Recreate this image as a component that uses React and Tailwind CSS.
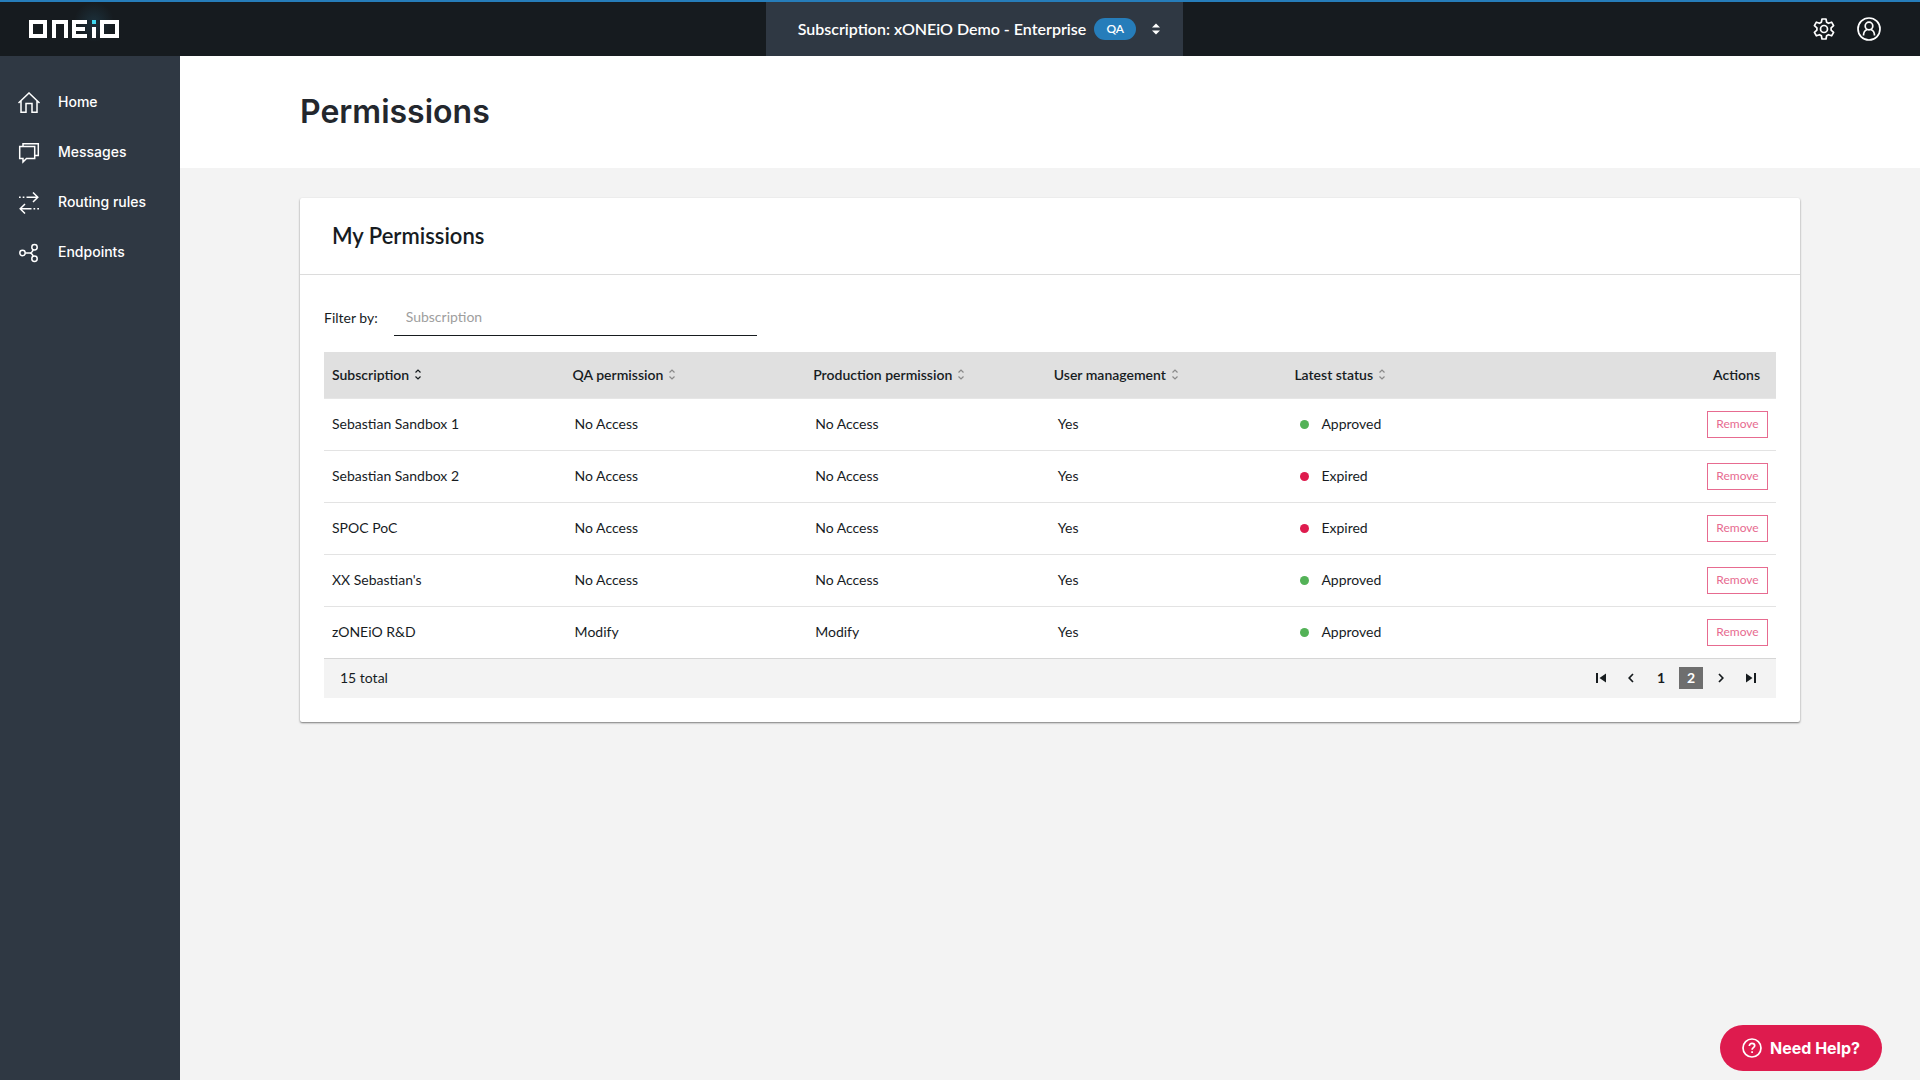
import { useState } from 'react';

const navItems = [
  { label: 'Home', icon: HomeIcon },
  { label: 'Messages', icon: MessagesIcon },
  { label: 'Routing rules', icon: RoutingIcon },
  { label: 'Endpoints', icon: EndpointsIcon },
];

const columns = ['Subscription', 'QA permission', 'Production permission', 'User management', 'Latest status'];

const permissions = [
  { name: 'Sebastian Sandbox 1', qa: 'No Access', production: 'No Access', management: 'Yes', status: 'Approved' },
  { name: 'Sebastian Sandbox 2', qa: 'No Access', production: 'No Access', management: 'Yes', status: 'Expired' },
  { name: 'SPOC PoC', qa: 'No Access', production: 'No Access', management: 'Yes', status: 'Expired' },
  { name: "XX Sebastian's", qa: 'No Access', production: 'No Access', management: 'Yes', status: 'Approved' },
  { name: 'zONEiO R&D', qa: 'Modify', production: 'Modify', management: 'Yes', status: 'Approved' },
];

function Logo() {
  return (
    <svg width="90" height="18" viewBox="0 0 90 18" className="overflow-visible" role="img" aria-label="ONEiO">
      <defs>
        <radialGradient id="glow">
          <stop offset="0" stopColor="#2f6f8f" stopOpacity="0.25" />
          <stop offset="1" stopColor="#2f6f8f" stopOpacity="0" />
        </radialGradient>
      </defs>
      <circle cx="65" cy="2" r="20" fill="url(#glow)" />
      <g fill="none" stroke="#fff" strokeWidth="4">
        <rect x="2" y="2" width="14" height="14" />
        <polyline points="25,18 25,2 37,2 37,18" />
        <polyline points="58,2 45,2 45,16 58,16" />
        <line x1="45" y1="9" x2="56" y2="9" />
        <line x1="65" y1="7" x2="65" y2="18" />
        <rect x="73" y="2" width="15" height="14" />
      </g>
      <rect x="63" y="0" width="4" height="4" fill="#3fd9f0" />
    </svg>
  );
}

function HomeIcon() {
  return (
    <svg width="22" height="22" viewBox="0 0 22 22" fill="none" stroke="currentColor" strokeWidth="1.5">
      <path d="M3 9v11.2h5V11.5h6v8.7h5V9M.5 11 11 1l10.5 10" />
    </svg>
  );
}

function MessagesIcon() {
  return (
    <svg width="22" height="22" viewBox="0 0 22 22" fill="none" stroke="currentColor" strokeWidth="1.5">
      <path d="M1.7 4.5h15v12H8.5L5 20v-3.5H1.7zM5 4.500V1.800h15.300v11.700h-3.500" />
    </svg>
  );
}

function RoutingIcon() {
  return (
    <svg width="22" height="22" viewBox="0 0 22 22" fill="none" stroke="currentColor" strokeWidth="1.5">
      <path d="M8.5 5.300H20M15 .5l4.800 4.800L15 10M1 5.300h1.700M4.700 5.300h1.700M13.500 16.700H2M7 12l-4.800 4.700L7 21.500M15.500 16.700h1.700M19.300 16.700H21" />
    </svg>
  );
}

function EndpointsIcon() {
  return (
    <svg width="22" height="22" viewBox="0 0 22 22" fill="none" stroke="currentColor" strokeWidth="1.5">
      <circle cx="4.5" cy="11" r="2.7" />
      <circle cx="16.5" cy="5.3" r="2.7" />
      <circle cx="16.5" cy="16.7" r="2.7" />
      <path d="M7.2 11h4.5M15.200 7.700C14.500 9.500 13.500 11 11.700 11c1.800 0 2.800 1.500 3.500 3.300" />
    </svg>
  );
}

function GearIcon() {
  return (
    <svg width="22" height="22" viewBox="0 0 22 22" fill="none" stroke="currentColor" strokeWidth="1.7" strokeLinejoin="round">
      <circle cx="11" cy="11" r="3.500" />
      <path d="M9 1h4l.6 3.200 1.900 1.100 3.100-1.100 2 3.500-2.500 2.100v2.400l2.500 2.100-2 3.500-3.100-1.100-1.900 1.100L13 21H9l-.6-3.200-1.900-1.100-3.100 1.100-2-3.500 2.500-2.100V9.800L1.400 7.700l2-3.500 3.100 1.100 1.900-1.100z" />
    </svg>
  );
}

function UserIcon() {
  return (
    <svg width="24" height="24" viewBox="0 0 24 24" fill="none" stroke="currentColor" strokeWidth="1.7">
      <circle cx="12" cy="12" r="11" />
      <circle cx="12" cy="9" r="3.8" />
      <path d="M6.500 18.500c0-3.500 1.500-5.200 3.700-6M17.500 18.500c0-3.500-1.500-5.200-3.700-6" />
    </svg>
  );
}

function SortIcon({ active }) {
  return (
    <svg
      width="6"
      height="11"
      viewBox="0 0 6 11"
      fill="none"
      stroke="currentColor"
      strokeWidth="1.2"
      className={active ? 'text-[#171c1f]' : 'text-[#8a8a8a]'}
    >
      <path d="M.5 3.500 3 1l2.500 2.500M.5 7.500 3 10l2.500-2.500" />
    </svg>
  );
}

function PagerButton({ label, active, onClick, children }) {
  return (
    <button
      type="button"
      aria-label={label}
      onClick={onClick}
      className={`flex h-[22px] w-6 items-center justify-center text-sm font-bold ${active ? 'bg-[#6e6e6e] text-white' : 'text-[#171c1f]'}`}
    >
      {children}
    </button>
  );
}

function Pager() {
  const [page, setPage] = useState(2);

  return (
    <div className="flex gap-[6px]">
      <PagerButton label="First page" onClick={() => setPage(1)}>
        <svg width="10" height="10" viewBox="0 0 10 10" fill="currentColor">
          <path d="M0 0h2v10H0zM10 .5v9L3.500 5z" />
        </svg>
      </PagerButton>
      <PagerButton label="Previous page" onClick={() => setPage(1)}>
        <svg width="6" height="10" viewBox="0 0 6 10" fill="none" stroke="currentColor" strokeWidth="1.7">
          <path d="M5 1 1.200 5 5 9" />
        </svg>
      </PagerButton>
      <PagerButton active={page === 1} onClick={() => setPage(1)}>1</PagerButton>
      <PagerButton active={page === 2} onClick={() => setPage(2)}>2</PagerButton>
      <PagerButton label="Next page" onClick={() => setPage(2)}>
        <svg width="6" height="10" viewBox="0 0 6 10" fill="none" stroke="currentColor" strokeWidth="1.7">
          <path d="M1 1l3.800 4L1 9" />
        </svg>
      </PagerButton>
      <PagerButton label="Last page" onClick={() => setPage(2)}>
        <svg width="10" height="10" viewBox="0 0 10 10" fill="currentColor">
          <path d="M8 0h2v10H8zM0 .5v9L6.500 5z" />
        </svg>
      </PagerButton>
    </div>
  );
}

function Header() {
  return (
    <header className="grid h-14 grid-cols-[1fr_auto_1fr] border-t-2 border-[#267dba] bg-[#161b1f] pl-[29px] text-white">
      <a href="#home" className="flex items-center self-center">
        <Logo />
      </a>
      <button type="button" className="flex items-center bg-[#2f3843] pl-8 pr-[23px]">
        <span className="text-base font-semibold">Subscription: xONEiO Demo - Enterprise</span>
        <span className="ml-2 flex h-[22px] w-[42px] items-center justify-center rounded-full bg-[#267dba] text-xs font-semibold">QA</span>
        <svg width="8" height="12" viewBox="0 0 8 12" fill="currentColor" className="ml-4">
          <path d="M0 4.500 4 .5l4 4zM0 7.500l4 4 4-4z" />
        </svg>
      </button>
      <div className="flex items-center justify-end gap-[22px] pr-[39px]">
        <button type="button" aria-label="Settings"><GearIcon /></button>
        <button type="button" aria-label="Account"><UserIcon /></button>
      </div>
    </header>
  );
}

function Sidebar() {
  return (
    <nav className="w-[180px] shrink-0 bg-[#2f3843] pt-[22px] font-[Inter,sans-serif] text-sm font-medium text-white">
      {navItems.map(({ label, icon: Icon }) => (
        <a key={label} href="#" className="flex h-[50px] items-center gap-[18px] pl-[18px]">
          <Icon />
          <span className="pb-[2px]">{label}</span>
        </a>
      ))}
    </nav>
  );
}

function PermissionsTable({ rows }) {
  return (
    <table className="w-full table-fixed text-left text-sm">
      <thead>
        <tr className="h-[46px] border-b border-[#e6e6e6] bg-[#e0e0e0]">
          {columns.map((column, i) => (
            <th key={column} className="w-[16.57%] px-2 font-semibold">
              <button type="button" className="flex items-center gap-[6px]">
                {column}
                <SortIcon active={i === 0} />
              </button>
            </th>
          ))}
          <th className="pr-4 text-right font-semibold">Actions</th>
        </tr>
      </thead>
      <tbody>
        {rows.map((row) => (
          <tr key={row.name} className="h-[52px] border-b border-[#e3e3e3] last:border-[#d6d6d6]">
            <td className="px-2">{row.name}</td>
            <td className="px-[10px]">{row.qa}</td>
            <td className="px-[10px]">{row.production}</td>
            <td className="px-3">{row.management}</td>
            <td className="px-[14px]">
              <span className="flex items-center gap-3">
                <span className={`size-[9px] rounded-full ${row.status === 'Approved' ? 'bg-[#53b257]' : 'bg-[#de1b4e]'}`} />
                {row.status}
              </span>
            </td>
            <td className="pr-2">
              <button
                type="button"
                className="ml-auto flex h-[27px] w-[61px] items-center justify-center border border-[#e76b90] text-xs text-[#e76b90]"
              >
                Remove
              </button>
            </td>
          </tr>
        ))}
      </tbody>
    </table>
  );
}

export default function App() {
  const [filter, setFilter] = useState('');
  const rows = permissions.filter((p) => p.name.toLowerCase().includes(filter.toLowerCase()));

  return (
    <div className="flex min-h-screen flex-col bg-[#f3f3f3] font-[Lato,sans-serif] text-[#171c1f]">
      <Header />
      <div className="flex flex-1">
        <Sidebar />
        <main className="min-w-0 flex-1">
          <div className="h-28 bg-white px-[120px] pt-8">
            <h1 className="font-[Inter,sans-serif] text-[32px] font-semibold leading-12 text-[#23272d]">Permissions</h1>
          </div>
          <section className="mx-[120px] mt-[30px] rounded-[2px] bg-white shadow-[0_1px_2px_rgba(0,0,0,0.5)]">
            <h2 className="border-b border-[#dcdcdc] px-8 py-6 text-[22px] font-semibold leading-7">My Permissions</h2>
            <div className="px-6 pb-6 pt-[25px]">
              <div className="mb-4 flex items-center gap-4 text-sm">
                <label htmlFor="filter">Filter by:</label>
                <input
                  id="filter"
                  type="text"
                  value={filter}
                  onChange={(e) => setFilter(e.target.value)}
                  placeholder="Subscription"
                  className="h-9 w-[363px] border-b border-[#171c1f] px-3 pb-[2px] placeholder:text-[#9e9e9e]"
                />
              </div>
              <PermissionsTable rows={rows} />
              <div className="flex h-[39px] items-center justify-between bg-[#f3f3f3] pl-4 pr-[13px] text-sm">
                <span>15 total</span>
                <Pager />
              </div>
            </div>
          </section>
        </main>
      </div>
      <button
        type="button"
        className="fixed bottom-[9px] right-[38px] flex h-[46px] w-[162px] items-center justify-center gap-2 rounded-full bg-[#de1b4e] font-[Inter,sans-serif] text-base font-bold text-white"
      >
        <svg width="20" height="20" viewBox="0 0 20 20" fill="none" stroke="currentColor" strokeWidth="1.7">
          <circle cx="10" cy="10" r="9" />
          <path d="M7.300 8c0-1.700 1.200-2.700 2.700-2.700s2.700 1 2.700 2.400c0 1.900-2.600 2-2.600 4M10.100 13.300v1.800" />
        </svg>
        Need Help?
      </button>
    </div>
  );
}
